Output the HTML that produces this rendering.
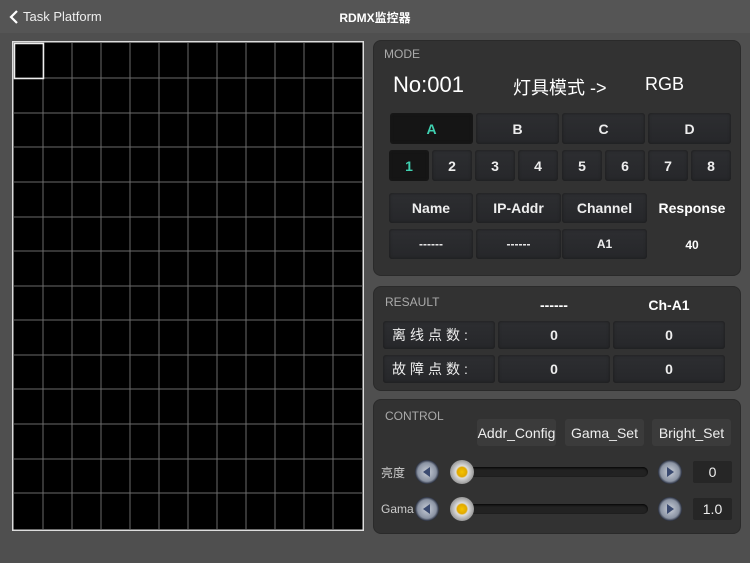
<!DOCTYPE html>
<html><head><meta charset="utf-8"><style>
*{margin:0;padding:0;box-sizing:border-box}
body{width:750px;height:563px;background:#4f4f4f;font-family:"Liberation Sans","Noto Sans CJK SC",sans-serif;color:#fff;position:relative;overflow:hidden}
.a{position:absolute}
.panel{position:absolute;background:#323232;border-radius:8px;border:1px solid #2a2a2a}
.btn{position:absolute;background:linear-gradient(#2d2e31,#26272a);border-radius:3px;box-shadow:inset 0 0 3px #1a1a1a;display:flex;align-items:center;justify-content:center;font-size:14px;font-weight:bold;color:#eee}
.sel{background:#151515;color:#3fd0b0}
.lbl{position:absolute;font-size:12px;color:#aaa}
.cb{position:absolute;background:#3b3b3b;border-radius:3px;display:flex;align-items:center;justify-content:center;font-size:14px;color:#eee}
.knob{position:absolute;width:24px;height:24px;border-radius:50%;background:radial-gradient(circle,#c9ced8 0,#8a93a3 55%,#2a3040 70%,#1a1d25 100%)}
.track{position:absolute;height:10px;border-radius:5px;background:#222;box-shadow:inset 0 1px 2px #000}
.thumb{position:absolute;width:24px;height:24px;border-radius:50%;background:radial-gradient(circle,#f5c400 0,#e0a800 28%,#ddd 36%,#999 70%,#555 100%)}
.val{position:absolute;background:#262626;border-radius:2px;display:flex;align-items:center;justify-content:center;font-size:14px;color:#eee}
</style></head><body>
<div class="a" style="left:0;top:0;width:750px;height:33px;background:#555"></div>
<svg class="a" style="left:8px;top:9px" width="12" height="16"><path d="M9 2 L3 8 L9 14" stroke="#fff" stroke-width="2.2" fill="none"/></svg>
<div class="a" style="left:23px;top:9px;font-size:13px;color:#eee">Task Platform</div>
<div class="a" style="left:0;width:750px;top:9px;text-align:center;font-size:12px;font-weight:bold">RDMX监控器</div>

<svg class="a" style="left:12px;top:41px" width="352" height="490">
<rect x="0.5" y="0.5" width="351" height="489" fill="#000" stroke="#ddd" stroke-width="2"/>
<g stroke="#6a6a6a" stroke-width="1">
<path d="M31 2V488M60 2V488M89 2V488M118 2V488M147 2V488M176 2V488M205 2V488M234 2V488M263 2V488M292 2V488M321 2V488"/>
<path d="M2 37H350M2 72H350M2 106H350M2 141H350M2 176H350M2 210H350M2 245H350M2 279H350M2 314H350M2 348H350M2 383H350M2 418H350M2 452H350"/>
</g>
<rect x="2.5" y="2.5" width="29" height="35" fill="none" stroke="#eee" stroke-width="1.5"/>
</svg>

<div class="panel" style="left:373px;top:40px;width:368px;height:236px"></div>
<div class="lbl" style="left:384px;top:47px">MODE</div>
<div class="a" style="left:393px;top:72px;font-size:22px">No:001</div>
<div class="a" style="left:513px;top:74px;font-size:18px">灯具模式 -&gt;</div>
<div class="a" style="left:645px;top:74px;font-size:18px">RGB</div>
<div class="btn sel" style="left:390px;top:113px;width:83px;height:31px">A</div>
<div class="btn" style="left:476px;top:113px;width:83px;height:31px">B</div>
<div class="btn" style="left:562px;top:113px;width:83px;height:31px">C</div>
<div class="btn" style="left:648px;top:113px;width:83px;height:31px">D</div>
<div class="btn sel" style="left:389px;top:150px;width:40px;height:31px">1</div>
<div class="btn" style="left:432px;top:150px;width:40px;height:31px">2</div>
<div class="btn" style="left:475px;top:150px;width:40px;height:31px">3</div>
<div class="btn" style="left:518px;top:150px;width:40px;height:31px">4</div>
<div class="btn" style="left:562px;top:150px;width:40px;height:31px">5</div>
<div class="btn" style="left:605px;top:150px;width:40px;height:31px">6</div>
<div class="btn" style="left:648px;top:150px;width:40px;height:31px">7</div>
<div class="btn" style="left:691px;top:150px;width:40px;height:31px">8</div>
<div class="btn" style="left:389px;top:193px;width:84px;height:30px">Name</div>
<div class="btn" style="left:476px;top:193px;width:85px;height:30px">IP-Addr</div>
<div class="btn" style="left:562px;top:193px;width:85px;height:30px">Channel</div>
<div class="a" style="left:648px;top:200px;width:88px;text-align:center;font-size:14px;font-weight:bold">Response</div>
<div class="btn" style="left:389px;top:229px;width:84px;height:30px;font-size:12px">------</div>
<div class="btn" style="left:476px;top:229px;width:85px;height:30px;font-size:12px">------</div>
<div class="btn" style="left:562px;top:229px;width:85px;height:30px;font-size:12px">A1</div>
<div class="a" style="left:648px;top:238px;width:88px;text-align:center;font-size:12px;font-weight:bold">40</div>

<div class="panel" style="left:373px;top:286px;width:368px;height:105px"></div>
<div class="lbl" style="left:385px;top:295px">RESAULT</div>
<div class="a" style="left:498px;top:297px;width:112px;text-align:center;font-size:14px;font-weight:bold">------</div>
<div class="a" style="left:613px;top:297px;width:112px;text-align:center;font-size:14px;font-weight:bold">Ch-A1</div>
<div class="btn" style="left:383px;top:321px;width:112px;height:28px;justify-content:flex-start;padding-left:9px;letter-spacing:4px;font-weight:normal">离线点数:</div>
<div class="btn" style="left:498px;top:321px;width:112px;height:28px">0</div>
<div class="btn" style="left:613px;top:321px;width:112px;height:28px">0</div>
<div class="btn" style="left:383px;top:355px;width:112px;height:28px;justify-content:flex-start;padding-left:9px;letter-spacing:4px;font-weight:normal">故障点数:</div>
<div class="btn" style="left:498px;top:355px;width:112px;height:28px">0</div>
<div class="btn" style="left:613px;top:355px;width:112px;height:28px">0</div>

<div class="panel" style="left:373px;top:399px;width:368px;height:135px"></div>
<div class="lbl" style="left:385px;top:409px">CONTROL</div>
<div class="cb" style="left:477px;top:419px;width:79px;height:27px">Addr_Config</div>
<div class="cb" style="left:565px;top:419px;width:79px;height:27px">Gama_Set</div>
<div class="cb" style="left:652px;top:419px;width:79px;height:27px">Bright_Set</div>

<div class="a" style="left:381px;top:464px;font-size:12px;color:#ccc">亮度</div>
<div class="knob" style="left:415px;top:460px"></div>
<svg class="a" style="left:415px;top:460px" width="24" height="24"><path d="M8 12 L15 7 L15 17Z" fill="#3a4a70"/></svg>
<div class="track" style="left:452px;top:467px;width:196px"></div>
<div class="thumb" style="left:450px;top:460px"></div>
<div class="knob" style="left:658px;top:460px"></div>
<svg class="a" style="left:658px;top:460px" width="24" height="24"><path d="M16 12 L9 7 L9 17Z" fill="#3a4a70"/></svg>
<div class="val" style="left:693px;top:461px;width:39px;height:22px">0</div>

<div class="a" style="left:381px;top:502px;font-size:12px;color:#ccc">Gama</div>
<div class="knob" style="left:415px;top:497px"></div>
<svg class="a" style="left:415px;top:497px" width="24" height="24"><path d="M8 12 L15 7 L15 17Z" fill="#3a4a70"/></svg>
<div class="track" style="left:452px;top:504px;width:196px"></div>
<div class="thumb" style="left:450px;top:497px"></div>
<div class="knob" style="left:658px;top:497px"></div>
<svg class="a" style="left:658px;top:497px" width="24" height="24"><path d="M16 12 L9 7 L9 17Z" fill="#3a4a70"/></svg>
<div class="val" style="left:693px;top:498px;width:39px;height:22px">1.0</div>
</body></html>
